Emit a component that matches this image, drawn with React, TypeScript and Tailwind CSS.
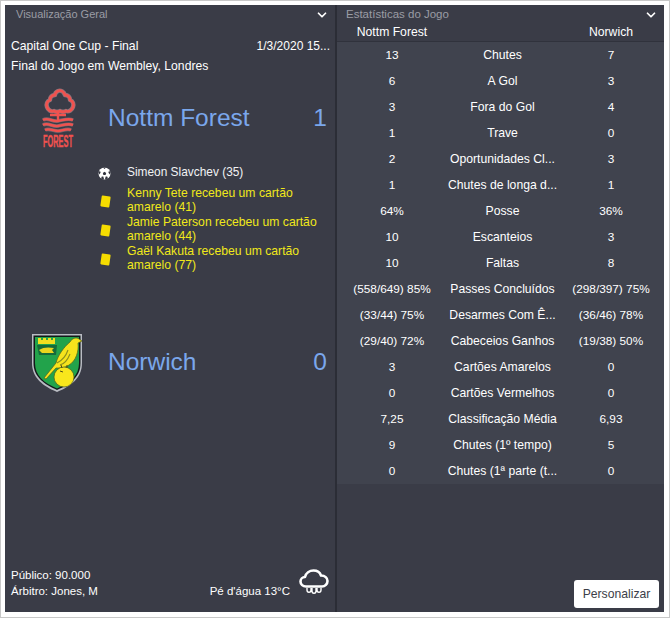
import { ChevronDown } from "lucide-react";

const stats = [
  ["13", "Chutes", "7"],
  ["6", "A Gol", "3"],
  ["3", "Fora do Gol", "4"],
  ["1", "Trave", "0"],
  ["2", "Oportunidades Cl...", "3"],
  ["1", "Chutes de longa d...", "1"],
  ["64%", "Posse", "36%"],
  ["10", "Escanteios", "3"],
  ["10", "Faltas", "8"],
  ["(558/649) 85%", "Passes Concluídos", "(298/397) 75%"],
  ["(33/44) 75%", "Desarmes Com Ê...", "(36/46) 78%"],
  ["(29/40) 72%", "Cabeceios Ganhos", "(19/38) 50%"],
  ["3", "Cartões Amarelos", "0"],
  ["0", "Cartões Vermelhos", "0"],
  ["7,25", "Classificação Média", "6,93"],
  ["9", "Chutes (1º tempo)", "5"],
  ["0", "Chutes (1ª parte (t...", "0"],
];

const cards = [
  ["Kenny Tete recebeu um cartão", "amarelo (41)"],
  ["Jamie Paterson recebeu um cartão", "amarelo (44)"],
  ["Gaël Kakuta recebeu um cartão", "amarelo (77)"],
];

function ForestBadge() {
  const crown =
    "M18 3c3-1 6 1 7 4 3 0 5 2 5 5 3 1 4 4 3 7-1 3-4 5-7 4-2 1-4 1-6 0-2 1-4 1-6 0-3 1-6-1-7-4-1-3 0-6 3-7 0-3 2-5 5-5 0-2 1-3 3-4z";
  const waves =
    "M3 32c5-3 9 2 15 1s10-3 15-1M3 37c5-3 9 2 15 1s10-3 15-1M5 42c4-2 9 1 13 1s9-3 13-1";
  return (
    <svg width="36" height="60" viewBox="0 0 36 60" fill="none" className="ml-[3px] overflow-visible">
      <path d={crown} stroke="#d9a0a4" strokeWidth="4.4" strokeLinejoin="round" opacity=".55" />
      <path d={waves} stroke="#d9a0a4" strokeWidth="3.6" opacity=".4" />
      <path d={crown} stroke="#f0524f" strokeWidth="2.8" strokeLinejoin="round" />
      <path d="M18 23v9M10 27h16" stroke="#f0524f" strokeWidth="2.4" />
      <path d={waves} stroke="#f0524f" strokeWidth="2.4" />
      <text
        x="18"
        y="58.500"
        textAnchor="middle"
        fill="#f0524f"
        stroke="#f0524f"
        strokeWidth=".4"
        fontSize="16"
        fontWeight="700"
        textLength="30"
        lengthAdjust="spacingAndGlyphs"
        fontFamily="Liberation Sans, sans-serif"
      >
        FOREST
      </text>
    </svg>
  );
}

function NorwichBadge() {
  return (
    <svg width="50" height="59" viewBox="0 0 50 59">
      <path d="M0 1h50v29c0 15-11 23-25 29C11 53 0 45 0 30z" fill="#b9bcc3" />
      <path d="M1.5 2.5h47V30c0 14-10 21-23.500 27C12 51 1.500 44 1.500 30z" fill="#12181a" />
      <path d="M3 4h44v26c0 13-9 20-22 25.500C12 50 3 43 3 30z" fill="#22a34b" />
      <path d="M6 5h3v2h2V5h3v2h2V5h3v2h2V5h2v6H6z" fill="#f2df1f" />
      <path d="M5 12h20l-1 10H7z" fill="#156a3a" />
      <path d="M7 17c4-3 10-3 15-2l-2 2 2 3H10z" fill="#e9d51e" />
      <path
        d="M12 45l12-15c2-8 8-16 14-21 2-4 7-5 9-3l3 2-4 2c1 8-2 18-9 22-4 3-9 3-13 3L14 46z"
        fill="#f6e41c"
        stroke="#56601a"
        strokeWidth=".7"
      />
      <path d="M25 30c4-2 9-7 11-13M28 32c4-1 8-6 10-11" stroke="#8c8f1c" strokeWidth="1.1" fill="none" />
      <circle cx="32" cy="44" r="10" fill="#f8e71c" stroke="#56601a" strokeWidth=".7" />
      <path d="M29 32l1 3M35 32v3M28 38l3 1" stroke="#4c4c1a" strokeWidth="1" />
    </svg>
  );
}

function CardIcon() {
  return <div className="w-[9px] h-[11px] bg-[#f5dc00] rounded-[1px] rotate-[8deg]" />;
}

function BallIcon() {
  return (
    <svg width="13" height="13" viewBox="0 0 13 13">
      <circle cx="6.5" cy="6.5" r="6" fill="#fff" />
      <path d="M6.5 4.800l1.700 1.200-.6 2H5.400l-.6-2z" fill="#30323c" />
      <path d="M5 .6h3l-1.500 1.500zM.5 5.400L2 3.800l.6 2-1.500 1.800zM12.500 5.400L11 3.800l-.6 2 1.500 1.800zM3 11.600l.8-2h1.500l.8 2.800zM10 11.600l-.8-2H7.700l-.8 2.800z" fill="#30323c" />
    </svg>
  );
}

function CloudIcon() {
  return (
    <svg width="30" height="26" viewBox="0 0 30 26" fill="none" stroke="#fff">
      <path
        d="M7 17.500c-3 0-5.500-2-5.500-5 0-2.500 2-4.500 4.500-4.500C7 4 10.500 1.500 14.500 1.500c3.500 0 6.500 2 7.500 5 4 .2 6.500 2.500 6.500 5.500s-2.500 5.500-5.500 5.500z"
        strokeWidth="2.6"
        strokeLinejoin="round"
      />
      <path d="M8 19v2c0 3 4 3 4 0v-2M13 19v3c0 3 4 3 4 0v-3M18 19v2c0 3 4 3 4 0v-2" strokeWidth="1.4" />
    </svg>
  );
}

function TeamRow({ name, score, badge }: { name: string; score: string; badge: React.ReactNode }) {
  return (
    <div className="flex items-center h-[60px]">
      <div className="w-[103px] flex justify-center shrink-0">{badge}</div>
      <div className="flex-1 text-[#7aa7ec] text-[24.5px] leading-none">{name}</div>
      <div className="text-[#7aa7ec] text-[24.5px] leading-none pr-[8px]">{score}</div>
    </div>
  );
}

export default function App() {
  return (
    <div className="w-[670px] h-[618px] bg-white border border-[#c8c8c8] pt-[4px] pl-[4px] pr-[5px] pb-[5px] font-['Liberation_Sans',Arial,sans-serif] text-[12.2px] text-white overflow-hidden">
      <div className="h-full flex bg-[#2b2d36]">
        {/* LEFT PANEL */}
        <section className="w-[330px] shrink-0 bg-[#3a3c47] flex flex-col">
          <header className="h-[18px] flex items-center justify-between pl-[11px] pr-[6px]">
            <span className="text-[#9a9da5] text-[11px] mt-[1px]">Visualização Geral</span>
            <ChevronDown size={14} strokeWidth={3} className="text-white mt-[2px]" />
          </header>

          <div className="pl-[6px] pr-[5px] pt-[13px] flex justify-between items-baseline leading-[20px]">
            <span>Capital One Cup - Final</span>
            <span className="text-[12px]">1/3/2020 15...</span>
          </div>
          <div className="px-[6px] leading-[20px]">Final do Jogo em Wembley, Londres</div>

          <div className="mt-[12px]">
            <TeamRow name="Nottm Forest" score="1" badge={<ForestBadge />} />
          </div>

          <div className="mt-[15px] flex items-center h-[20px] text-[#f1f2f4] text-[11.9px]">
            <div className="w-[122px] flex justify-end pr-[16px]">
              <BallIcon />
            </div>
            <span>Simeon Slavchev (35)</span>
          </div>

          <div className="mt-[3px] flex flex-col gap-[1px] text-[#f0e81a] leading-[14px]">
            {cards.map((c) => (
              <div key={c[0]} className="flex items-center">
                <div className="w-[122px] flex justify-end pr-[17px] pt-[2px]">
                  <CardIcon />
                </div>
                <div>
                  {c[0]}
                  <br />
                  {c[1]}
                </div>
              </div>
            ))}
          </div>

          <div className="mt-[60px]">
            <TeamRow name="Norwich" score="0" badge={<NorwichBadge />} />
          </div>

          <div className="mt-auto pl-[6px] pr-[6px] pb-[13px] flex justify-between items-end text-[11.5px]">
            <div className="leading-[16px]">
              <div>Público: 90.000</div>
              <div>Árbitro: Jones, M</div>
            </div>
            <div className="flex items-end gap-[9px]">
              <span className="leading-[16px]">Pé d'água 13°C</span>
              <div className="mb-[4px]">
                <CloudIcon />
              </div>
            </div>
          </div>
        </section>

        <div className="w-[2px] shrink-0" />

        {/* RIGHT PANEL */}
        <section className="flex-1 bg-[#3a3c47] flex flex-col">
          <header className="h-[18px] flex items-center justify-between pl-[9px] pr-[6px]">
            <span className="text-[#9a9da5] text-[11.500px] mt-[1px]">Estatísticas do Jogo</span>
            <ChevronDown size={14} strokeWidth={3} className="text-white mt-[2px]" />
          </header>

          <div className="grid grid-cols-[110px_1fr_106px] h-[19px] items-center border-b border-[#30323c] text-center">
            <span>Nottm Forest</span>
            <span />
            <span>Norwich</span>
          </div>

          <div className="bg-[#40434e]">
            {stats.map((r) => (
              <div key={r[1]} className="grid grid-cols-[110px_1fr_106px] h-[26px] items-baseline leading-[26px] text-center">
                <span className="text-[11.8px]">{r[0]}</span>
                <span>{r[1]}</span>
                <span className="text-[11.8px]">{r[2]}</span>
              </div>
            ))}
          </div>

          <div className="mt-auto flex justify-end pr-[5px] pb-[4px]">
            <button className="w-[85px] h-[28px] bg-white rounded-[3px] text-[#3c3e48]">Personalizar</button>
          </div>
        </section>
      </div>
    </div>
  );
}
